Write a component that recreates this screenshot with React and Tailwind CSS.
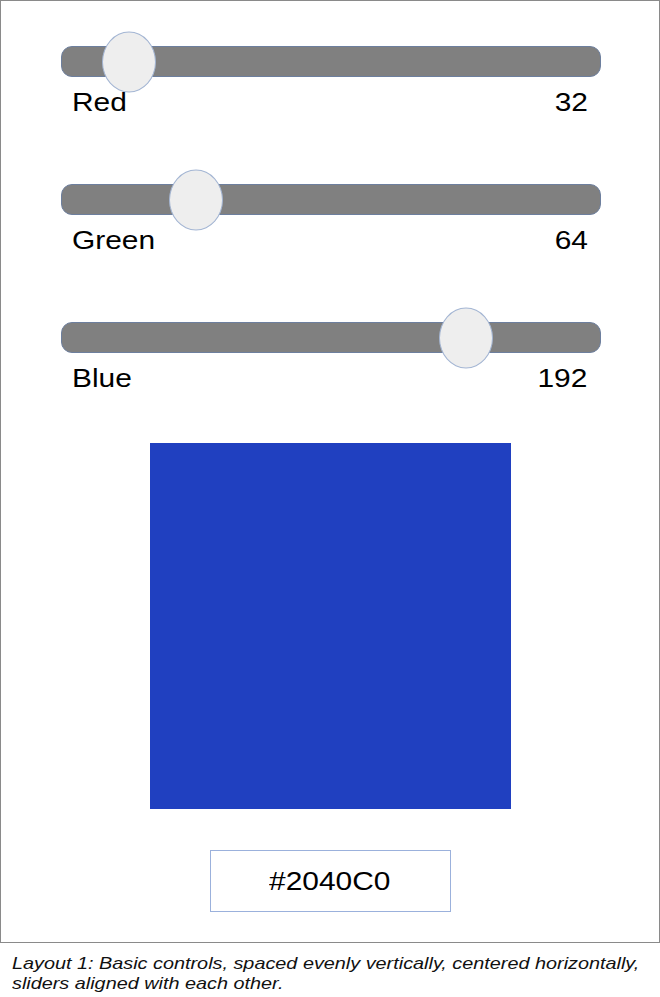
import { useState } from "react";

const channels = [
  { name: "Red", value: 32 },
  { name: "Green", value: 64 },
  { name: "Blue", value: 192 },
];

function Slider({ name, value }) {
  // thumb centre follows the value along the track
  const left = (value / 255) * 537 - 27;
  return (
    <div className="w-[540px] ml-px">
      <div className="relative h-[31px] rounded-[11px] bg-[#808080] border border-[#6d7f9e]">
        <div
          className="absolute top-1/2 -translate-y-1/2 w-[54px] h-[61px] rounded-[50%] bg-[#eeeeee] border border-[#a3b5d3]"
          style={{ left }}
        />
      </div>
      <div className="flex justify-between mt-[10px] pl-[11px] pr-[13px] text-[26px] leading-[30px] text-black">
        <span className="inline-block origin-left scale-x-[1.15]">{name}</span>
        <span className="inline-block origin-right scale-x-[1.15]">{value}</span>
      </div>
    </div>
  );
}

export default function App() {
  const [values] = useState(channels);

  return (
    <div className="w-[660px] bg-white" style={{ fontFamily: '"Liberation Sans", Arial, sans-serif' }}>
      <div className="w-[660px] h-[943px] border border-[#8a8a8a] flex flex-col items-center pt-[45px]">
        <div className="flex flex-col gap-[67px]">
          {values.map((c) => (
            <Slider key={c.name} name={c.name} value={c.value} />
          ))}
        </div>
        <div className="mt-[50px] w-[361px] h-[366px] bg-[#2040C0]" />
        <div className="mt-[41px] w-[241px] h-[62px] border border-[#9bb1dc] flex items-center justify-center text-[26px] text-black">
          <span className="inline-block scale-x-[1.15]">#2040C0</span>
        </div>
      </div>
      <p className="w-[556px] ml-[12px] pt-[11px] text-[17px] leading-[20px] italic text-[#111] origin-left scale-x-[1.166]">
        Layout 1: Basic controls, spaced evenly vertically, centered horizontally, sliders aligned with each other.
      </p>
    </div>
  );
}
